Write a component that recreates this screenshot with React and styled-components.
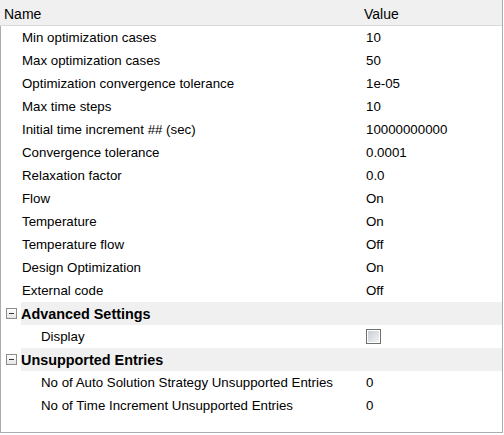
import React from "react";
import styled, { createGlobalStyle } from "styled-components";

const GlobalStyle = createGlobalStyle`
  html, body {
    margin: 0;
    padding: 0;
    background: #ffffff;
  }
  body {
    font-family: "Liberation Sans", Arial, sans-serif;
    color: #000;
  }
`;

const rows = [
  { name: "Min optimization cases", value: "10" },
  { name: "Max optimization cases", value: "50" },
  { name: "Optimization convergence tolerance", value: "1e-05" },
  { name: "Max time steps", value: "10" },
  { name: "Initial time increment ## (sec)", value: "10000000000" },
  { name: "Convergence tolerance", value: "0.0001" },
  { name: "Relaxation factor", value: "0.0" },
  { name: "Flow", value: "On" },
  { name: "Temperature", value: "On" },
  { name: "Temperature flow", value: "Off" },
  { name: "Design Optimization", value: "On" },
  { name: "External code", value: "Off" },
];

const groups = [
  {
    title: "Advanced Settings",
    items: [{ name: "Display", check: true }],
  },
  {
    title: "Unsupported Entries",
    items: [
      { name: "No of Auto Solution Strategy Unsupported Entries", value: "0" },
      { name: "No of Time Increment Unsupported Entries", value: "0" },
    ],
  },
];

const Frame = styled.div`
  width: 503px;
  height: 433px;
  border-right: 1px solid #a7adb3;
  display: flex;
  flex-direction: column;
  box-sizing: border-box;
`;

const Header = styled.div`
  height: 26px;
  display: grid;
  grid-template-columns: 362px 1fr;
  align-items: center;
  background: #f0f0f0;
  border-bottom: 1px solid #d9d9d9;
  box-sizing: border-box;
  font-size: 14px;
`;

const HeadCell = styled.div`
  padding-left: ${(p) => p.$pad}px;
  padding-top: 2px;
`;

const Body = styled.div`
  flex: 1;
  border-left: 1px solid #a7adb3;
  border-bottom: 1px solid #a7adb3;
  display: flex;
  flex-direction: column;
`;

const Row = styled.div`
  height: 23px;
  display: grid;
  grid-template-columns: 361px 1fr;
  align-items: center;
  font-size: 13.3px;
`;

const NameCell = styled.div`
  padding-left: ${(p) => p.$indent}px;
  white-space: nowrap;
`;

const ValueCell = styled.div`
  padding-left: 4px;
  display: flex;
  align-items: center;
`;

const GroupRow = styled.div`
  height: 23px;
  display: flex;
  align-items: center;
`;

const Toggle = styled.div`
  width: 19px;
  display: flex;
  justify-content: center;
  padding-left: 1px;
`;

const MinusBox = styled.div`
  width: 9px;
  height: 9px;
  border: 1px solid #8c8c8c;
  background: linear-gradient(#ffffff, #e6e6e6);
  position: relative;
  &::after {
    content: "";
    position: absolute;
    left: 2px;
    right: 2px;
    top: 4px;
    height: 1px;
    background: #333;
  }
`;

const GroupTitle = styled.div`
  flex: 1;
  height: 100%;
  display: flex;
  align-items: center;
  background: #f0f0f0;
  font-weight: bold;
  font-size: 14.4px;
`;

const CheckBox = styled.div`
  width: 11px;
  height: 11px;
  border: 1px solid #6f6f6f;
  background: #fff;
  padding: 1px;
  &::after {
    content: "";
    display: block;
    width: 100%;
    height: 100%;
    background: linear-gradient(135deg, #c9cdd4, #f1f2f4);
  }
`;

export default function App() {
  return (
    <>
      <GlobalStyle />
      <Frame>
        <Header>
          <HeadCell $pad={4}>Name</HeadCell>
          <HeadCell $pad={2}>Value</HeadCell>
        </Header>
        <Body>
          {rows.map((r) => (
            <Row key={r.name}>
              <NameCell $indent={21}>{r.name}</NameCell>
              <ValueCell>{r.value}</ValueCell>
            </Row>
          ))}
          {groups.map((g) => (
            <React.Fragment key={g.title}>
              <GroupRow>
                <Toggle>
                  <MinusBox />
                </Toggle>
                <GroupTitle>{g.title}</GroupTitle>
              </GroupRow>
              {g.items.map((it) => (
                <Row key={it.name}>
                  <NameCell $indent={40}>{it.name}</NameCell>
                  <ValueCell>{it.check ? <CheckBox /> : it.value}</ValueCell>
                </Row>
              ))}
            </React.Fragment>
          ))}
        </Body>
      </Frame>
    </>
  );
}
